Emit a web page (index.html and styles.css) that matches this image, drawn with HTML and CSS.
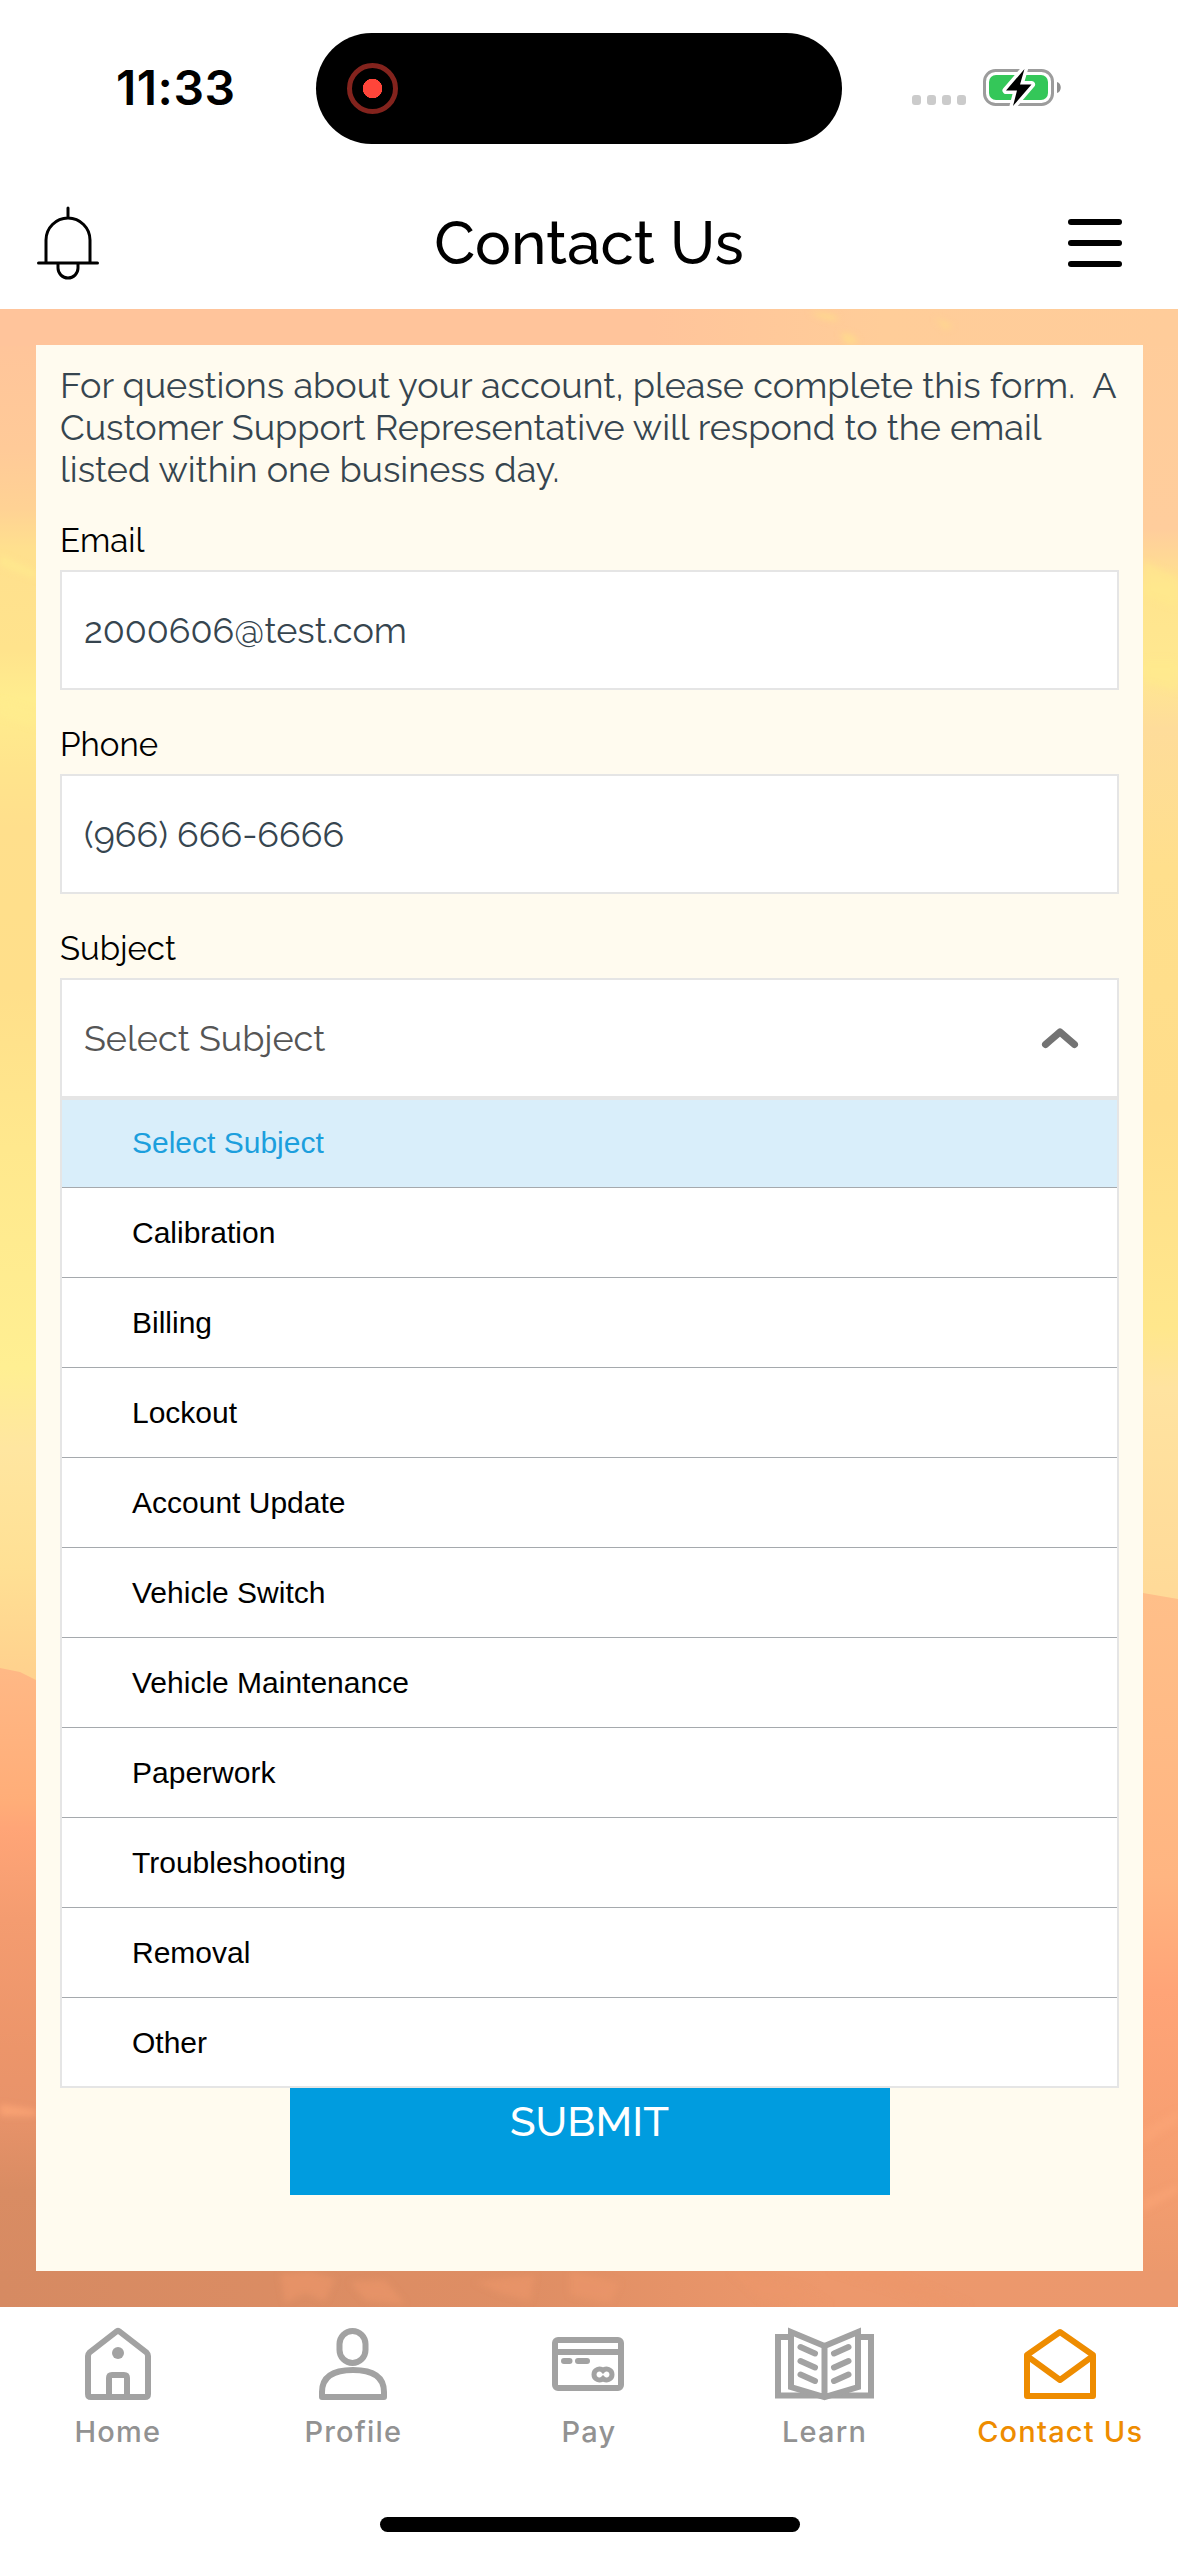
FILE: index.html
```html
<!DOCTYPE html>
<html lang="en">
<head>
<meta charset="utf-8">
<title>Contact Us</title>
<link rel="stylesheet" href="styles.css">
</head>
<body>
<div class="app">
  <div class="status">
    <span class="time">11:33</span>
    <div class="island"><span class="rec"></span></div>
    <div class="signal"><i></i><i></i><i></i><i></i></div>
    <svg class="battery" width="80" height="40" viewBox="982 68 80 40">
      <rect x="984.5" y="70.500" width="68" height="34" rx="11" fill="none" stroke="#9c9c9c" stroke-width="3"/>
      <rect x="989" y="75" width="59" height="25" rx="7" fill="#34c759"/>
      <path d="M1057 82c5 1 5 10 0 11z" fill="#8e8e8e"/>
      <path d="M1024.500 69L1006 90.500h11l-4 15.500 18.500-21.500h-11.500z" fill="#000" stroke="#fff" stroke-width="7" paint-order="stroke" stroke-linejoin="round"/>
    </svg>
  </div>
  <header class="header">
    <svg width="64" height="74" viewBox="36 206 64 74" fill="none" stroke="#000" stroke-width="3" stroke-linecap="round">
      <path d="M68 208v10M38.500 263h59M46 262v-22a22 22 0 0 1 44 0v22M58 264v4a10 10 0 0 0 20 0v-4"/>
    </svg>
    <h1 class="title">Contact Us</h1>
    <div class="menu"><i></i><i></i><i></i></div>
  </header>
  <main class="scene">
    <svg class="sky" viewBox="0 309 1178 1998" preserveAspectRatio="none">
      <defs>
        <linearGradient id="left" gradientUnits="userSpaceOnUse" x1="0" y1="309" x2="0" y2="2307">
          <stop offset="0" stop-color="#ffc39b"/><stop offset=".07" stop-color="#ffca98"/><stop offset=".1" stop-color="#ffd294"/><stop offset=".12" stop-color="#ffe08e"/><stop offset=".17" stop-color="#ffe38c"/><stop offset=".195" stop-color="#ffed8e"/><stop offset=".23" stop-color="#ffe48c"/><stop offset=".26" stop-color="#ffdf8c"/><stop offset=".34" stop-color="#ffdf8a"/><stop offset=".42" stop-color="#ffe88d"/><stop offset=".53" stop-color="#ffef92"/><stop offset=".57" stop-color="#ffe6a0"/><stop offset=".63" stop-color="#ffe094"/><stop offset=".68" stop-color="#ffd28e"/><stop offset="1" stop-color="#ffc080"/>
        </linearGradient>
        <linearGradient id="right" gradientUnits="userSpaceOnUse" x1="0" y1="309" x2="0" y2="2307">
          <stop offset="0" stop-color="#ffcc9a"/><stop offset=".11" stop-color="#ffcd9c"/><stop offset=".14" stop-color="#ffe48e"/><stop offset=".18" stop-color="#ffe890"/><stop offset=".21" stop-color="#fedc9a"/><stop offset=".28" stop-color="#ffdf8c"/><stop offset=".4" stop-color="#ffdd8a"/><stop offset=".51" stop-color="#ffe78c"/><stop offset=".54" stop-color="#ffe3a0"/><stop offset=".64" stop-color="#ffda98"/><stop offset="1" stop-color="#ffc080"/>
        </linearGradient>
        <linearGradient id="land" gradientUnits="userSpaceOnUse" x1="0" y1="1660" x2="0" y2="2307">
          <stop offset="0" stop-color="#ffb986"/><stop offset=".22" stop-color="#ffad78"/><stop offset=".26" stop-color="#ffa577"/><stop offset=".4" stop-color="#f49c70"/><stop offset=".6" stop-color="#ec956a"/><stop offset=".7" stop-color="#e8936a"/><stop offset=".82" stop-color="#d98c63"/><stop offset="1" stop-color="#d68a62"/>
        </linearGradient>
        <linearGradient id="slope" gradientUnits="userSpaceOnUse" x1="0" y1="1590" x2="0" y2="2307">
          <stop offset="0" stop-color="#ffbf89"/><stop offset=".4" stop-color="#ffb581"/><stop offset=".56" stop-color="#ffa477"/><stop offset=".8" stop-color="#f59e70"/><stop offset="1" stop-color="#e9976b"/>
        </linearGradient>
        <linearGradient id="foot" x1="0" x2="1" y1="0" y2="0">
          <stop offset="0" stop-color="#d68a62"/><stop offset=".45" stop-color="#df8e64"/><stop offset=".7" stop-color="#ed986c"/><stop offset="1" stop-color="#eb986d"/>
        </linearGradient>
        <linearGradient id="haze" x1="0" x2="1" y1="0" y2="0">
          <stop offset="0" stop-color="#ffc49b"/><stop offset=".55" stop-color="#ffc49b"/><stop offset=".75" stop-color="#ffcd99"/><stop offset="1" stop-color="#ffcc9a"/>
        </linearGradient>
        <filter id="soft"><feGaussianBlur stdDeviation="3"/></filter>
      </defs>
      <rect x="0" y="309" width="589" height="1998" fill="url(#left)"/>
      <rect x="589" y="309" width="589" height="1998" fill="url(#right)"/>
      <rect x="0" y="309" width="1178" height="37" fill="url(#haze)"/>
      <g filter="url(#soft)">
        <path d="M0 555l36 16v8L0 566zM0 700l36 12v16L0 716z" fill="#ffed8e" opacity=".6"/>
        <path d="M1143 560l35 18v30l-35-12zM1143 660h35v32l-35-10z" fill="#ffeb8c" opacity=".5"/>
        <path d="M810 312q30 2 28 8-12 2-28-8zM840 333q16 0 18 10l-12 1zM935 318l18 8-8 3z" fill="#ffda8c"/>
      </g>
      <path d="M0 1668l20 4 16 8v627H0z" fill="url(#land)"/>
      <path d="M1143 1593l35 6v708h-35z" fill="url(#slope)"/>
      <rect x="0" y="2271" width="1178" height="36" fill="url(#foot)"/>
      <g filter="url(#soft)">
        <path d="M0 2104l36 6v6H0z" fill="#ffa877" opacity=".7"/>
        <path d="M1143 2130l35-20v12l-35 24zM1143 2200l35-16v8l-35 20z" fill="#fba577" opacity=".6"/>
        <path d="M280 2274l30-3 25 8-10 22-20-8-20 10zM350 2282l35-2 20 24-40-4zM475 2282l60-7-5 26-30-8zM570 2271l50 12-10 20-40-8zM730 2271l70 16 30 18-70-6zM830 2271h60l80 34h-30z" fill="#ed9669" opacity=".6"/>
      </g>
    </svg>
    <form class="card">
      <p class="intro">For questions about your account, please complete this form.&nbsp; A<br>Customer Support Representative will respond to the email<br>listed within one business day.</p>
      <label class="label email">Email</label>
      <div class="field">2000606@test.com</div>
      <label class="label">Phone</label>
      <div class="field">(966) 666-6666</div>
      <label class="label">Subject</label>
      <div class="field select"><span class="placeholder">Select Subject</span>
        <svg width="40" height="26" viewBox="0 0 40 26" fill="none" stroke="#737373" stroke-width="7" stroke-linecap="round" stroke-linejoin="round"><path d="M5.500 19.500L20 7l14.500 12.500"/></svg>
      </div>
      <ul class="options">
        <li class="active">Select Subject</li><li>Calibration</li><li>Billing</li><li>Lockout</li><li>Account Update</li><li>Vehicle Switch</li><li>Vehicle Maintenance</li><li>Paperwork</li><li>Troubleshooting</li><li>Removal</li><li>Other</li>
      </ul>
      <div class="submit"><span>SUBMIT</span></div>
    </form>
  </main>
  <nav class="tabs">
    <div class="tab"><svg width="110" height="76" viewBox="63 2326 110 76" fill="none" stroke="#a2a2a2" stroke-width="6" stroke-linejoin="round">
      <path d="M88 2356q0-2 1.500-3.500l27-21q1.500-1.500 3 0l27 21q1.500 1.500 1.500 3.500v38q0 3-3 3H91q-3 0-3-3z"/><path d="M109 2397v-19q0-3 3-3h12q3 0 3 3v19"/><circle cx="118" cy="2353" r="6" fill="#a2a2a2" stroke="none"/></svg><span>Home</span></div>
    <div class="tab"><svg width="110" height="76" viewBox="298.500 2326 110 76" fill="none" stroke="#a2a2a2" stroke-width="6" stroke-linejoin="round">
      <rect x="340" y="2331" width="26" height="32" rx="13"/><path d="M322.500 2397v-5c0-16 12-22 31-22s31 6 31 22v5z"/></svg><span>Profile</span></div>
    <div class="tab"><svg width="110" height="76" viewBox="534 2326 110 76" fill="none" stroke="#a2a2a2" stroke-width="6">
      <rect x="555" y="2340" width="66" height="48" rx="3"/><path d="M555 2352h66"/><path d="M564 2361h5.500M578 2361h9" stroke-linecap="round"/><path d="M603 2370.500c-3-3-9-1-9 4s6 7 9 4c3 3 9 1 9-4s-6-7-9-4z" stroke-width="5"/></svg><span>Pay</span></div>
    <div class="tab"><svg width="110" height="76" viewBox="769 2326 110 76" fill="none" stroke="#a2a2a2" stroke-width="6">
      <path d="M788 2337h-11v58.500h93v-58.500h-11"/><path d="M790 2332l33.500 14 33.500-14v55l-33.500 10-33.500-10zM823.500 2346v50" fill="#fff"/><path d="M799.500 2347l14.500 6.500M799.500 2361l14.500 6.500M799.500 2374.500l14.500 6.500M847.500 2347l-14.500 6.500M847.500 2361l-14.500 6.500M847.500 2374.500l-14.500 6.500" stroke-linecap="round"/></svg><span>Learn</span></div>
    <div class="tab current"><svg width="110" height="76" viewBox="1005 2326 110 76" fill="none" stroke="#ee8c00" stroke-width="6" stroke-linejoin="round">
      <path d="M1027 2355l33-23 33 23v41h-66zM1027 2356l33 24 33-24"/></svg><span>Contact Us</span></div>
  </nav>
  <div class="home-bar"></div>
</div>
</body>
</html>
```

FILE: styles.css
```css
* { box-sizing: border-box; }
body { margin: 0; background: #fff; color: #000; font-family: Raleway, Lato, sans-serif; }
.app { width: 1178px; height: 2556px; display: flex; flex-direction: column; background: #fff; }
svg { display: block; flex: none; }

.status { height: 177px; display: flex; align-items: flex-start; }
.time { width: 200px; margin-left: 116px; padding-top: 59px; font: 600 48px/58px Inter, sans-serif; letter-spacing: .5px; }
.island { width: 526px; height: 111px; margin-top: 33px; border-radius: 56px; background: #000; display: flex; align-items: center; padding-left: 31px; }
.rec { width: 51px; height: 51px; border: 5px solid #83231d; border-radius: 50%; background: radial-gradient(circle, #ff453a 9.5px, transparent 10px); }
.signal { display: flex; gap: 6px; margin: 95px 0 0 70px; }
.signal i { width: 9px; height: 10px; border-radius: 3px; background: #cbcbcb; }
.battery { margin: 68px 0 0 16px; }

.header { height: 132px; display: flex; justify-content: space-between; padding: 29px 56px 0 36px; }
.title { margin: 0 0 0 10px; font-weight: 500; font-size: 60px; line-height: 74px; }
.menu { width: 54px; display: flex; flex-direction: column; gap: 15px; padding-top: 13px; }
.menu i { height: 6px; border-radius: 3px; background: #000; }

.scene { height: 1998px; padding: 36px 35px 36px 36px; position: relative; }
.sky { position: absolute; inset: 0; width: 1178px; height: 1998px; }
.card { position: relative; height: 1926px; background: #fffbef; padding: 19px 24px 0; }
.intro { margin: 0; height: 157px; font-size: 36px; line-height: 42px; color: #36454f; white-space: nowrap; }
.label { display: block; height: 84px; padding: 35px 0 0; font-size: 33px; line-height: 40px; }
.label.email { height: 49px; padding: 0; }
.field { height: 120px; border: 2px solid #e5e5e5; background: #fff; padding: 0 22px; display: flex; align-items: center; justify-content: space-between; font-size: 36px; color: #36454f; }
.select { padding-right: 37px; }
.placeholder { color: #555; }
.options { list-style: none; margin: 0; padding: 0; height: 990px; border: 2px solid #e5e5e5; background: #fff; font: 30px/34px "Liberation Sans", Arial, sans-serif; }
.options li { height: 90px; padding: 28px 0 0 70px; border-bottom: 1px solid #a5a9ad; }
.options li:first-child { height: 88px; padding-top: 26px; }
.options li:last-child { border: 0; height: 88px; }
.options .active { background: #d9eefa; color: #1c9fdd; }
.submit { width: 600px; height: 107px; margin: 0 auto; background: #009cdf; color: #fff; text-align: center; font-weight: 500; font-size: 42px; line-height: 50px; padding-top: 9px; }

.tabs { display: grid; grid-template-columns: repeat(5, 1fr); padding-top: 19px; height: 210px; }
.tab { display: flex; flex-direction: column; align-items: center; gap: 12px; color: #929292; font: 450 29px/36px Inter, sans-serif; letter-spacing: 1.2px; }
.current { color: #ee8c00; }
.home-bar { width: 420px; height: 15px; margin: 0 0 0 380px; border-radius: 8px; background: #000; }
```
